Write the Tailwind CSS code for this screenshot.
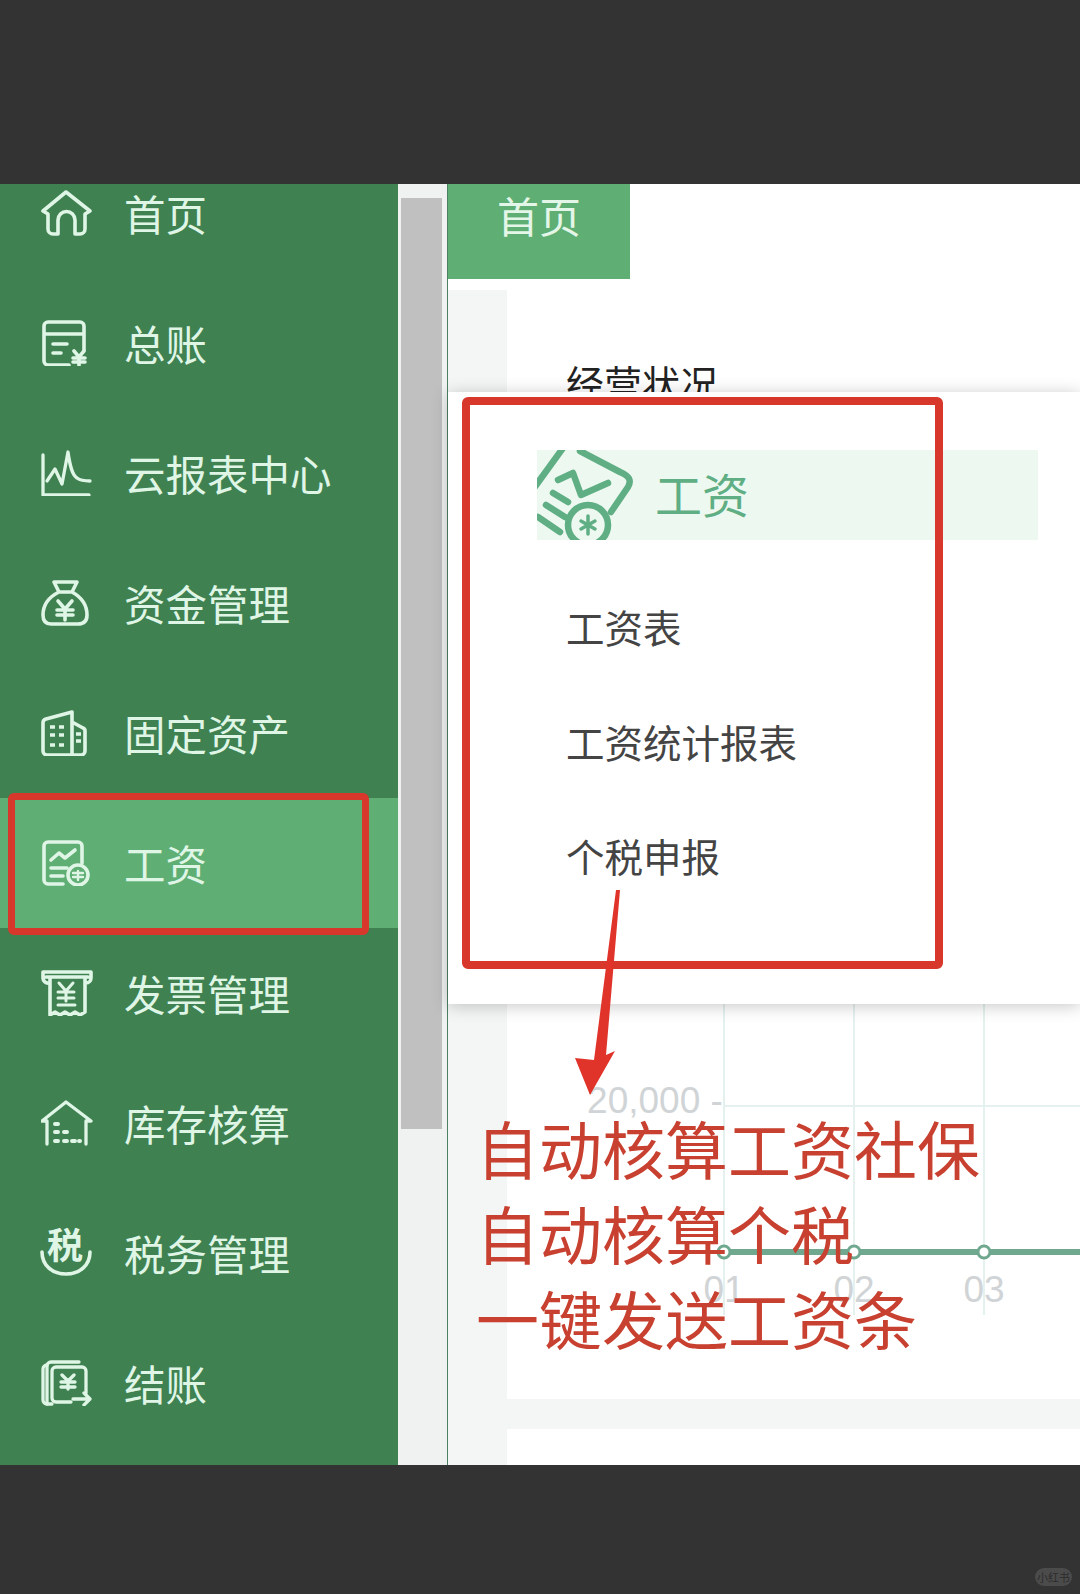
<!DOCTYPE html>
<html lang="zh-CN">
<head>
<meta charset="utf-8">
<title>工资</title>
<script src="https://cdn.jsdelivr.net/npm/@tailwindcss/browser@4"></script>
</head>
<body class="m-0 bg-[#333333]">
<div class="relative w-[1080px] h-[1594px] overflow-hidden flex flex-col bg-[#333333] font-['Noto_Sans_CJK_SC','Noto_Sans',sans-serif]">
  <div class="h-[184px] shrink-0"></div>

  <div class="relative h-[1281px] shrink-0 flex overflow-hidden">
    <!-- sidebar -->
    <nav class="w-[398px] shrink-0 bg-[#3f8150] text-[#dff5e6] text-[41.5px] leading-[46px] overflow-hidden">
      <div class="-mt-[36px]">
        <div class="h-[130px] flex items-center pl-[41px] gap-[31px]">
          <svg class="w-[52px] h-[46px]" viewBox="0 0 52 46" fill="none" stroke="currentColor" stroke-width="3.6" stroke-linejoin="round" stroke-linecap="round"><path d="M2 21 25 2l24 19-5 3v15a5 5 0 0 1-5 5h-5V30a8 8 0 0 0-17 0v14h-5a5 5 0 0 1-5-5V24z"/></svg>
          <span>首页</span>
        </div>
        <div class="h-[130px] flex items-center pl-[41px] gap-[31px]">
          <svg class="w-[52px] h-[46px]" viewBox="0 0 52 46" fill="none" stroke="currentColor" stroke-width="3.6" stroke-linecap="round"><path d="M28 45H7a4 4 0 0 1-4-4V6a4 4 0 0 1 4-4h32a4 4 0 0 1 4 4v24M3 14h40M12 24h14M12 33h8"/><path d="m33 31 5 6 5-6M38 37v9M32 38h12M32 42h12" stroke-width="3.6"/></svg>
          <span>总账</span>
        </div>
        <div class="h-[130px] flex items-center pl-[41px] gap-[31px]">
          <svg class="w-[52px] h-[46px]" viewBox="0 0 52 46" fill="none" stroke="currentColor" stroke-width="3.3" stroke-linecap="round" stroke-linejoin="round"><path d="M2 5v40h46"/><path d="M6 31l8-12 7 15 6-32c2 14 4 23 9 26 4 3 9 3 13 3"/></svg>
          <span>云报表中心</span>
        </div>
        <div class="h-[130px] flex items-center pl-[41px] gap-[31px]">
          <svg class="w-[52px] h-[46px]" viewBox="0 0 52 46" fill="none" stroke="currentColor" stroke-width="3.6" stroke-linecap="round" stroke-linejoin="round"><path d="M13 2h23l-5 10H18zM18 12C8 17 2 25 2 35c0 6 3 9 8 9h27c6 0 9-3 9-9 0-10-6-18-15-23"/><path d="m17 21 7 8 7-8M24 29v11M16 30h16M16 35h16"/></svg>
          <span>资金管理</span>
        </div>
        <div class="h-[130px] flex items-center pl-[41px] gap-[31px]">
          <svg class="w-[52px] h-[46px]" viewBox="0 0 52 46" fill="none" stroke="currentColor" stroke-width="3.6" stroke-linecap="round" stroke-linejoin="round"><path d="M6 45a4 4 0 0 1-4-4V13a4 4 0 0 1 3-4L31 2v43zM31 12l11 6a3 3 0 0 1 2 3v20a4 4 0 0 1-4 4H31"/><path d="M9 17h5M18 17h5M9 25h5M18 25h5M9 35h5M18 35h5M35 24h5M35 31h5" stroke-width="3.6" stroke-linecap="butt"/></svg>
          <span>固定资产</span>
        </div>
        <div class="h-[130px] flex items-center pl-[41px] gap-[31px] bg-[#5fae74]">
          <svg class="w-[52px] h-[46px]" viewBox="0 0 52 46" fill="none" stroke="currentColor" stroke-width="3.6" stroke-linecap="round" stroke-linejoin="round"><path d="M22 44H7a4 4 0 0 1-4-4V6a4 4 0 0 1 4-4h30a4 4 0 0 1 4 4v17"/><path d="m10 20 8-7 6 5 10-8M10 28h16M10 36h12"/><circle cx="37" cy="35" r="10"/><path d="M32 33h10M32 37h10M37 31v9" stroke-width="2.4"/></svg>
          <span>工资</span>
        </div>
        <div class="h-[130px] flex items-center pl-[41px] gap-[31px]">
          <svg class="w-[52px] h-[46px]" viewBox="0 0 52 46" fill="none" stroke="currentColor" stroke-width="3.6" stroke-linecap="round" stroke-linejoin="round"><path d="M8 13a5 5 0 0 1-6-5V2h48v6a5 5 0 0 1-5 5M5 7h42M9 7v38l5-3 5 3 5-3 5 3 5-3 5 3 5-3V7"/><path d="m18 13 7 8 7-8M25 21v10M17 22h16M17 28h16M17 35h17" stroke-width="3"/></svg>
          <span>发票管理</span>
        </div>
        <div class="h-[130px] flex items-center pl-[41px] gap-[31px]">
          <svg class="w-[52px] h-[46px]" viewBox="0 0 52 46" fill="none" stroke="currentColor" stroke-width="3.3" stroke-linecap="round" stroke-linejoin="round"><path d="M6 44V21H1L25 2l25 19h-5v23"/><path d="M14 24h3M14 32h3M23 32h3M14 41h3M23 41h3M31 41h3M38 41h1" stroke-width="4"/></svg>
          <span>库存核算</span>
        </div>
        <div class="h-[130px] flex items-center pl-[41px] gap-[31px]">
          <svg class="w-[52px] h-[46px] overflow-visible" viewBox="0 0 52 46" fill="none" stroke="currentColor" stroke-width="3.6" stroke-linecap="round"><path d="M1 22c0 13 10 22 24 22s24-9 24-22"/><text x="24" y="29" text-anchor="middle" font-size="36" font-weight="700" fill="currentColor" stroke="none">税</text></svg>
          <span>税务管理</span>
        </div>
        <div class="h-[130px] flex items-center pl-[41px] gap-[31px]">
          <svg class="w-[52px] h-[46px]" viewBox="0 0 52 46" fill="none" stroke="currentColor" stroke-width="3.3" stroke-linecap="round" stroke-linejoin="round"><path d="M11 44H6a4 4 0 0 1-4-4V9a4 4 0 0 1 4-4"/><path d="M6 44V6a4 4 0 0 1 4-4h28"/><path d="M30 42H15a4 4 0 0 1-4-4V11a4 4 0 0 1 4-4h26a4 4 0 0 1 4 4v22"/><path d="m21 15 6 6 6-6M27 21v8M20 22h14M20 27h14M32 39h16M43 33l6 6-6 6"/></svg>
          <span>结账</span>
        </div>
      </div>
    </nav>

    <!-- scrollbar -->
    <div class="w-[49px] shrink-0 bg-[#f0f1f1] pt-[14px] pl-[3px]">
      <div class="w-[41px] h-[931px] bg-[#bfc0bf]"></div>
    </div>
    <div class="w-px shrink-0 bg-[#4d7f63]"></div>

    <!-- content -->
    <main class="relative flex-1 min-w-0 bg-white overflow-hidden">
      <div class="w-[182px] h-[95px] bg-[#5fae74] text-[#e4f6e8] text-[42px] leading-[46px] flex items-center justify-center pb-[34px]">首页</div>
      <div class="mt-[11px] flex">
        <div class="w-[59px] bg-[#f4f6f6]"></div>
        <div class="flex-1">
          <div class="relative h-[1109px] bg-white rounded-bl-[12px] pt-[70px] pl-[59px] text-[38px] leading-[44px] text-[#222]">
            经营状况
            <svg class="absolute left-0 top-0 w-[573px] h-[1109px]" viewBox="0 0 573 1109" fill="none">
              <path d="M217 700v325M347 700v325M477 700v325M217 816h356" stroke="#e4f1ee" stroke-width="2"/>
              <path d="M217 962h356" stroke="#6fa88f" stroke-width="6"/>
              <g fill="#fff" stroke="#6fa88f" stroke-width="3"><circle cx="217" cy="962" r="6"/><circle cx="347" cy="962" r="6"/><circle cx="477" cy="962" r="6"/></g>
              <g fill="#d0d4d6" font-size="37" font-family="Liberation Sans, sans-serif" text-anchor="middle"><text x="217" y="1012">01</text><text x="347" y="1012">02</text><text x="477" y="1012">03</text><text x="148" y="823">20,000 -</text></g>
            </svg>
          </div>
          <div class="h-[30px] bg-[#f4f6f6]"></div>
          <div class="h-[60px] bg-white rounded-tl-[12px]"></div>
        </div>
      </div>
    </main>

    <!-- popup menu -->
    <div class="absolute left-[448px] top-[208px] w-[632px] h-[612px] bg-white shadow-[0_2px_16px_rgba(0,0,0,0.22)] pt-[58px] pl-[89px]">
      <div class="w-[501px] h-[90px] bg-[#edf9f0] flex items-center overflow-hidden text-[47px] leading-[54px] text-[#5fae84]">
        <svg class="w-[100px] h-[90px] shrink-0" viewBox="5 0 100 90" fill="none" stroke="#5fae84" stroke-width="6.5" stroke-linecap="round" stroke-linejoin="round">
          <path d="M2 38 31-2M48 1l40 21c9 4 12 8 8 15L79 62"/>
          <path d="m26 30 15-7 8 22 27-12"/>
          <path d="m21 43 15 9M14 55l19 12M6 67l22 15"/>
          <circle cx="56" cy="75" r="20"/>
          <path d="M49 71l14 8M63 71l-14 8M56 66v18" stroke-width="3.5"/>
        </svg>
        <span class="ml-[18px] pb-[4px]">工资</span>
      </div>
      <div class="text-[38.5px] leading-[44px] text-[#444]">
        <div class="mt-[64px] ml-[29px]">工资表</div>
        <div class="mt-[71px] ml-[29px]">工资统计报表</div>
        <div class="mt-[70px] ml-[29px]">个税申报</div>
      </div>
    </div>

    <!-- annotations -->
    <div class="absolute left-[8px] top-[609px] w-[361px] h-[142px] border-[7px] border-[#d8382b] rounded-[6px]"></div>
    <div class="absolute left-[462px] top-[213px] w-[481px] h-[572px] border-[8px] border-[#d8382b] rounded-[6px]"></div>
    <svg class="absolute left-[570px] top-[706px] w-[60px] h-[214px]" viewBox="0 0 60 214"><path d="M46 0 50 0 36 165 45 161 20 205 5 168 24 170z" fill="#e0332a"/></svg>
    <div class="absolute left-[476px] top-[920px] text-[63px] leading-[85px] text-[#c8402f] whitespace-nowrap">
      <div>自动核算工资社保</div>
      <div>自动核算个税</div>
      <div>一键发送工资条</div>
    </div>
  </div>

  <div class="flex-1 relative">
    <span class="absolute left-[1035px] top-[103px] w-[37px] h-[18px] rounded-full bg-[#4b4b4b] text-[#2b2b2b] text-[11px] leading-[18px] text-center">小红书</span>
  </div>
</div>
</body>
</html>
